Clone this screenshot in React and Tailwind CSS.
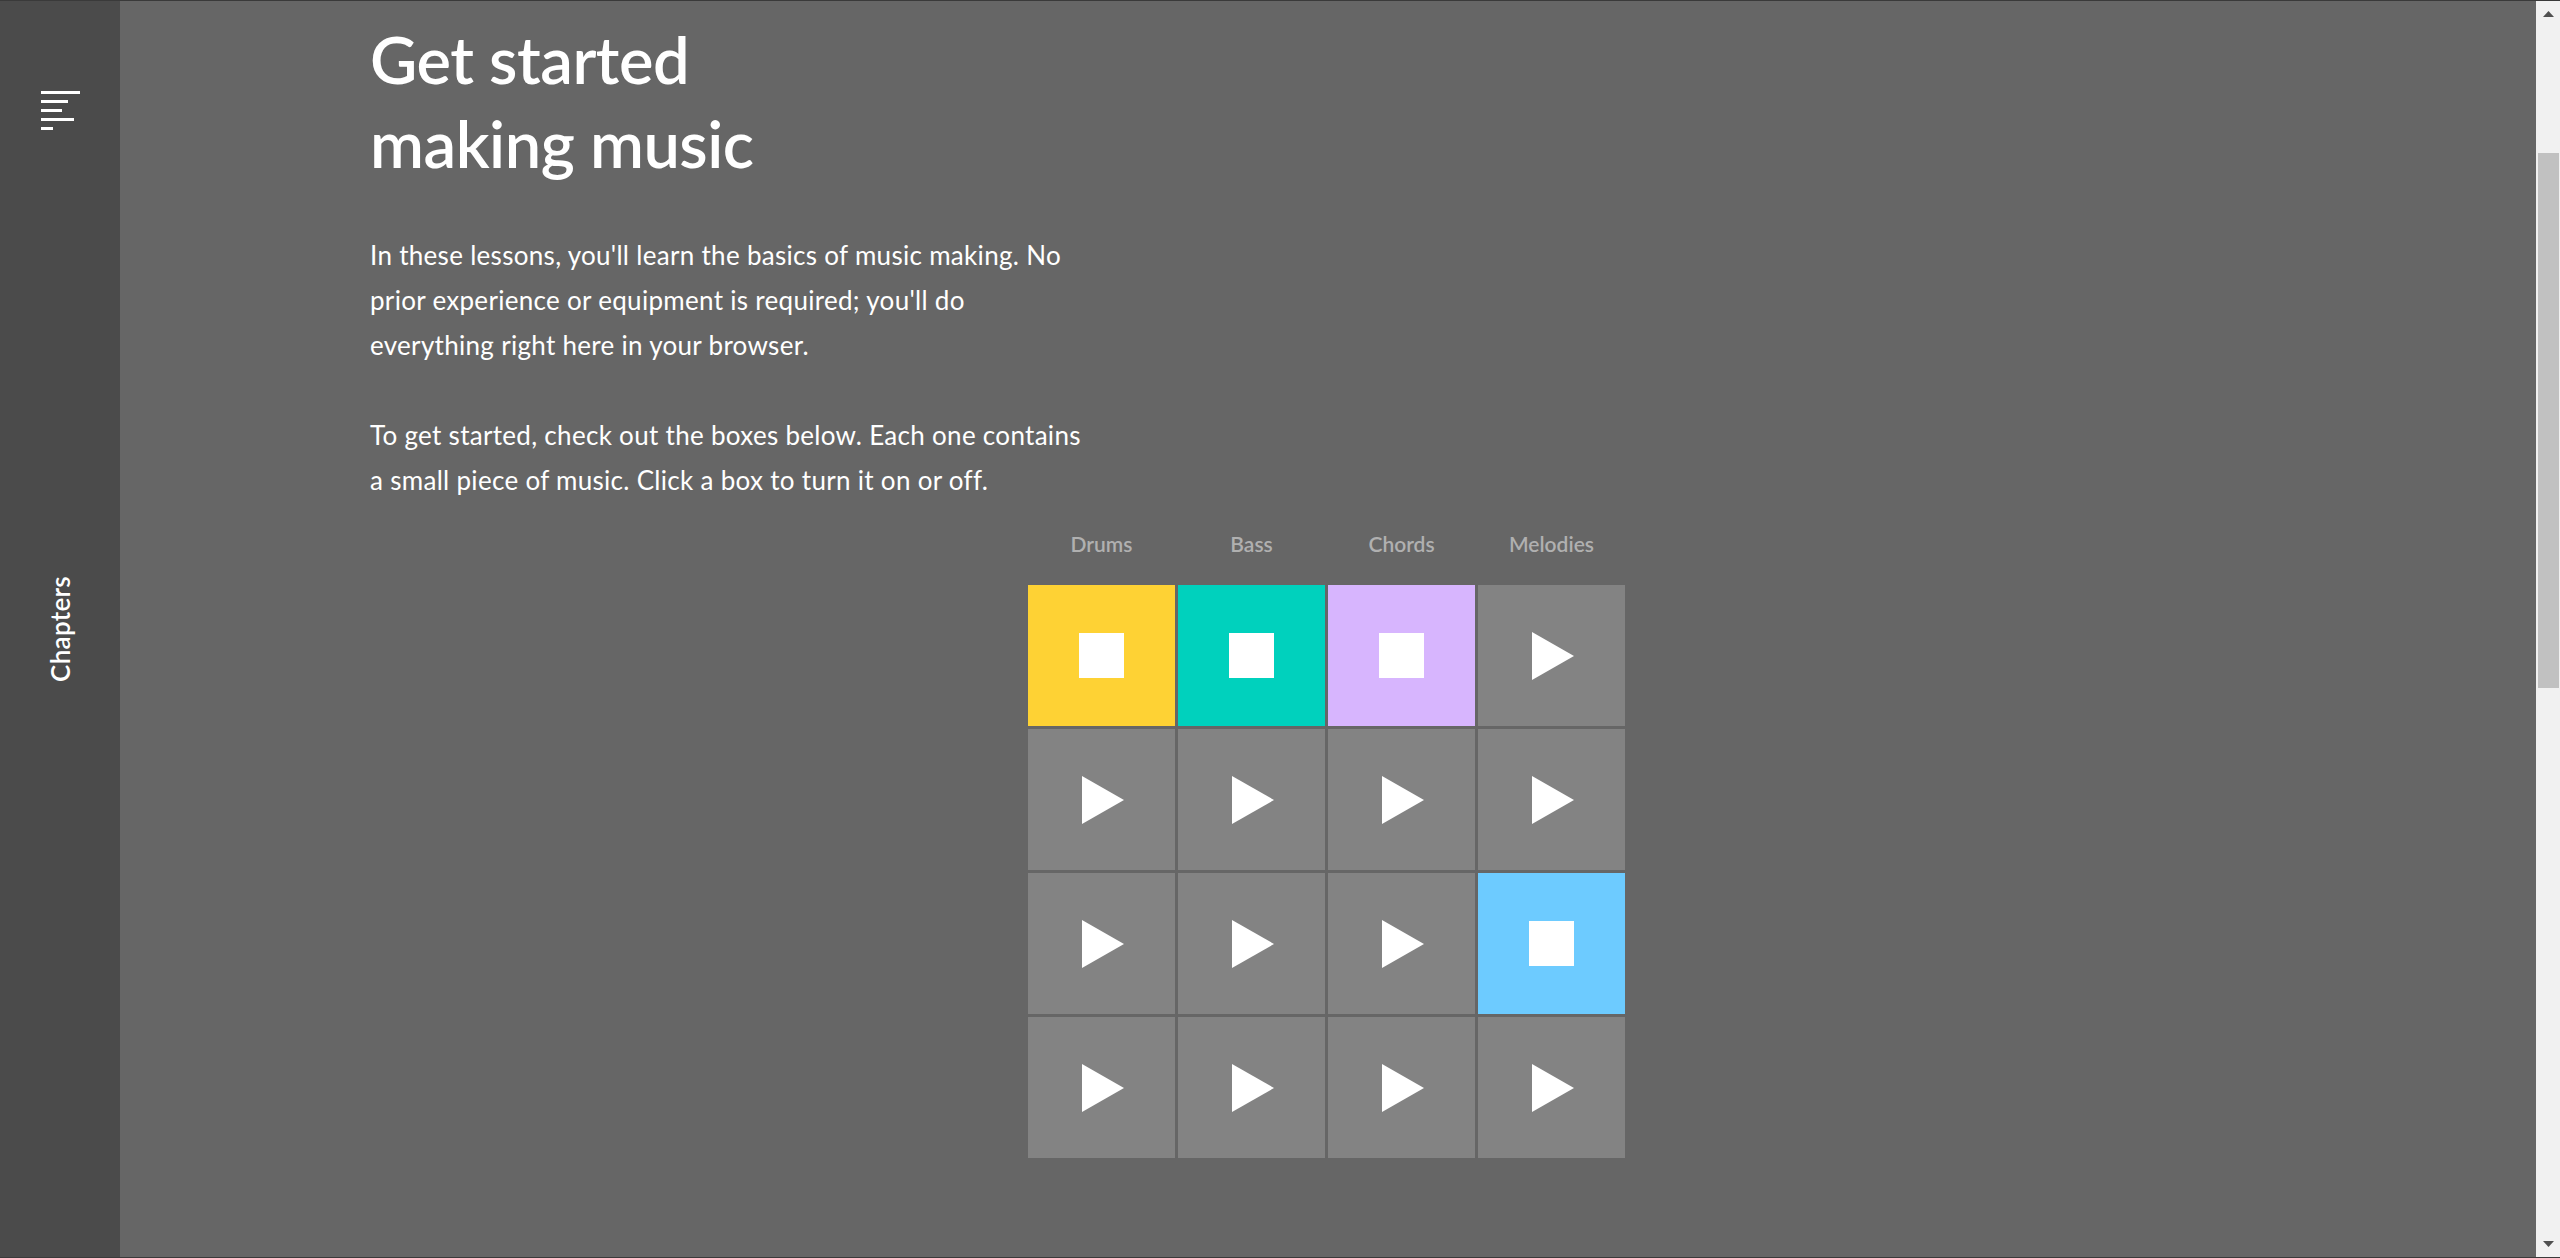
import React from "react";

const COLUMNS = ["Drums", "Bass", "Chords", "Melodies"];

// active cell colours per column, null = off
const GRID = [
  ["bg-[#fed234]", "bg-[#00d1bd]", "bg-[#d7b5fe]", null],
  [null, null, null, null],
  [null, null, null, "bg-[#6dcbff]"],
  [null, null, null, null],
];

function StopIcon() {
  return <div className="w-[45px] h-[45px] bg-white" />;
}

function PlayIcon() {
  return (
    <svg width="42" height="48" viewBox="0 0 42 48" className="ml-[3px]">
      <polygon points="0,0 42,24 0,48" fill="#fff" />
    </svg>
  );
}

function Cell({ color }) {
  return (
    <button
      className={`w-[147px] h-[141px] flex items-center justify-center ${
        color ? color : "bg-[#838383]"
      }`}
    >
      {color ? <StopIcon /> : <PlayIcon />}
    </button>
  );
}

function MenuIcon() {
  return (
    <div className="flex flex-col gap-[6px]">
      <span className="block h-[3px] w-[39px] bg-white" />
      <span className="block h-[3px] w-[27px] bg-white" />
      <span className="block h-[3px] w-[21px] bg-white" />
      <span className="block h-[3px] w-[33px] bg-white" />
      <span className="block h-[3px] w-[12px] bg-white" />
    </div>
  );
}

function Sidebar() {
  return (
    <aside className="w-[120px] shrink-0 bg-[#4b4b4b] flex flex-col">
      <div className="h-[136px] pt-[90px] pl-[41px]">
        <MenuIcon />
      </div>
      <div className="flex-1 flex items-center justify-center">
        <span className="[writing-mode:vertical-rl] rotate-180 text-white text-[26px] font-semibold leading-none tracking-[0.3px]">
          Chapters
        </span>
      </div>
      <div className="h-[136px]" />
    </aside>
  );
}

function Arrow({ down }) {
  return (
    <svg width="11" height="6" viewBox="0 0 11 6">
      <polygon
        points={down ? "0,0 11,0 5.5,6" : "5.5,0 11,6 0,6"}
        fill="#505050"
      />
    </svg>
  );
}

function Scrollbar() {
  return (
    <div className="w-[24px] shrink-0 bg-[#f1f1f1] flex flex-col">
      <div className="h-[26px] flex items-center justify-center pl-[1px]">
        <Arrow />
      </div>
      <div className="h-[126px]" />
      <div className="h-[535px] ml-[2px] w-[21px] bg-[#c1c1c1]" />
      <div className="flex-1" />
      <div className="h-[26px] flex items-center justify-center pl-[1px]">
        <Arrow down />
      </div>
    </div>
  );
}

export default function App() {
  return (
    <div className="h-[1258px] w-full flex border-y border-[#3a3a3a] overflow-hidden font-['Lato','Noto_Sans',sans-serif]">
      <Sidebar />

      <main className="flex-1 bg-[#666666] pt-[16px]">
        <div className="pl-[250px]">
          <h1 className="text-white text-[65px] leading-[84px] font-semibold tracking-[-0.5px]">
            Get started
            <br />
            making music
          </h1>

          <div className="mt-[48px] text-white text-[26px] leading-[45px] tracking-[0.3px] whitespace-nowrap">
            <p>
              In these lessons, you'll learn the basics of music making. No
              <br />
              prior experience or equipment is required; you'll do
              <br />
              everything right here in your browser.
            </p>
            <p className="mt-[45px]">
              To get started, check out the boxes below. Each one contains
              <br />a small piece of music. Click a box to turn it on or off.
            </p>
          </div>
        </div>

        <div className="mt-[26px] flex justify-center pr-[3px]">
          <div>
            <div className="grid grid-cols-[repeat(4,147px)] gap-x-[3px] mb-[26px]">
              {COLUMNS.map((c) => (
                <div
                  key={c}
                  className="text-center text-[#b0b0b0] text-[21px] leading-[30px] font-semibold"
                >
                  {c}
                </div>
              ))}
            </div>
            <div className="grid grid-cols-[repeat(4,147px)] gap-[3px]">
              {GRID.map((row, r) =>
                row.map((color, i) => <Cell key={`${r}-${i}`} color={color} />)
              )}
            </div>
          </div>
        </div>
      </main>

      <Scrollbar />
    </div>
  );
}
